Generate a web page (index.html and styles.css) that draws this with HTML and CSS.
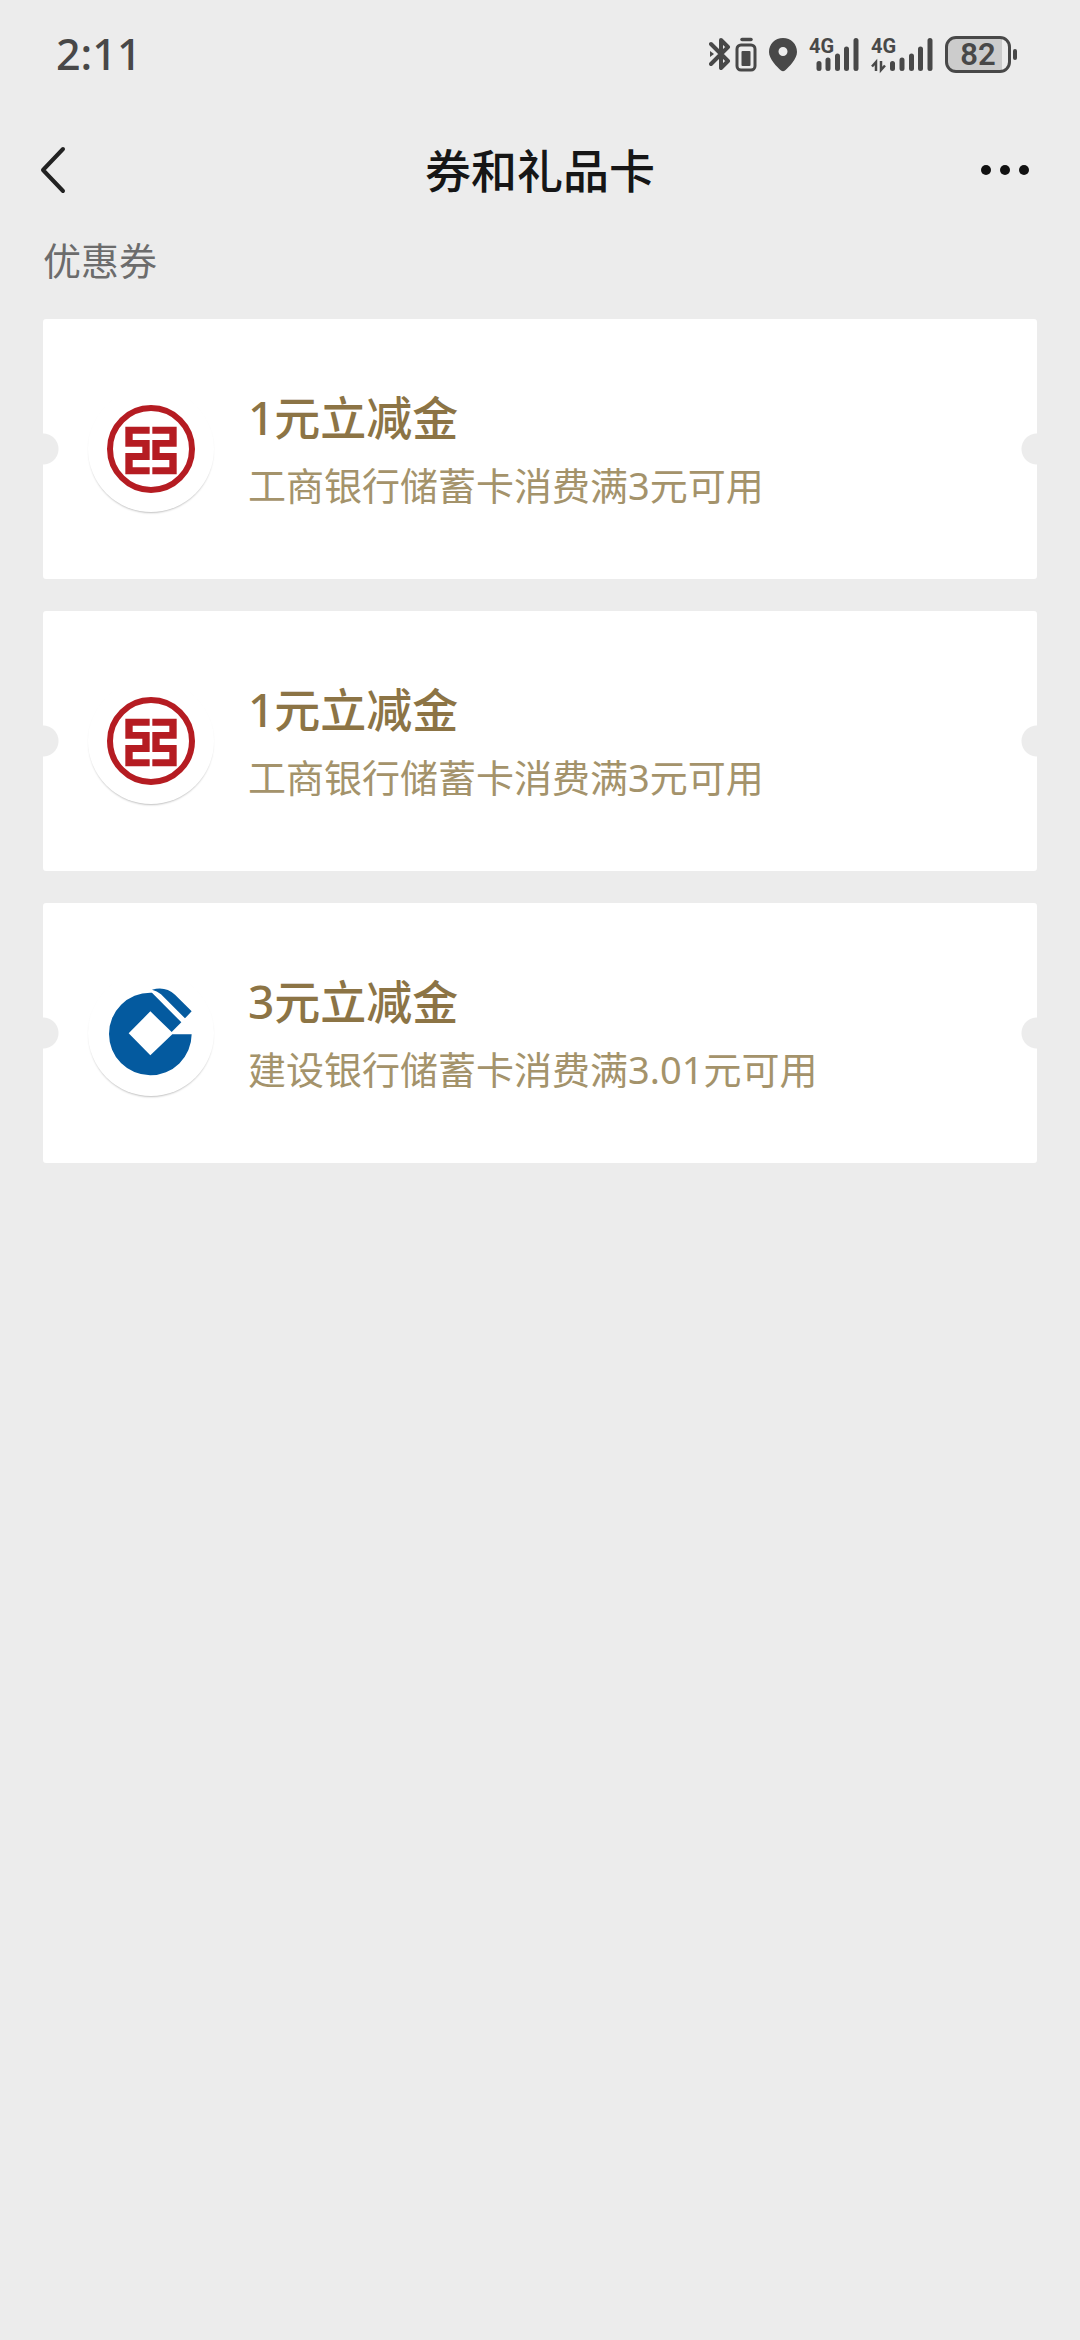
FILE: index.html
```html
<!DOCTYPE html>
<html lang="zh-CN">
<head>
<meta charset="utf-8">
<meta name="viewport" content="width=device-width, initial-scale=1">
<title>券和礼品卡</title>
<link rel="stylesheet" href="styles.css">
</head>
<body>
<svg class="symbols" aria-hidden="true">
  <symbol id="icbc" viewBox="0 0 264 264">
    <circle cx="132" cy="132" r="123" fill="none" stroke="#b51c22" stroke-width="18"/>
    <path fill="#b51c22" d="M55 65H128V86H77V105H128V165H77V187H128V208H55V144H106V125H55ZM209 65H136V86H187V105H136V165H187V187H136V208H209V144H158V125H209Z"/>
  </symbol>
  <symbol id="ccb" viewBox="0 0 264 264">
    <path fill="#045a9f" d="M130 11A124 124 0 1 0 254 136H196L130 199L65 133L130 67L194 129L223 100L135 11ZM135 2Q175-10 204 17L254 67L234 88L162 16Q150 5 135 2Z"/>
  </symbol>
</svg>

<div class="status">
  <time class="clock">2:11</time>
  <div class="indicators">
    <svg width="22" height="36" viewBox="0 0 22 36" aria-label="蓝牙">
      <path d="M2 8L19 25L12 32V4L19 11L2 28" fill="none" stroke="#484848" stroke-width="4" stroke-linejoin="round" stroke-linecap="round"/>
      <path d="M1 15L5 18L1 21Z" fill="#484848"/>
    </svg>
    <svg class="device" width="22" height="36" viewBox="0 0 22 36" aria-label="设备电量">
      <path d="M7 3.500H16" stroke="#484848" stroke-width="3.500" stroke-linecap="round"/>
      <rect x="2" y="9" width="18" height="25" rx="4" fill="none" stroke="#484848" stroke-width="3"/>
      <rect x="6.500" y="15" width="9" height="15" rx="1" fill="#484848"/>
    </svg>
    <svg class="pin" width="28" height="36" viewBox="0 0 28 36" aria-label="定位">
      <path fill="#484848" fill-rule="evenodd" d="M14 2C6 2 0 8 0 16C0 23 8 31 12 34.500Q14 36 16 34.500C20 31 28 23 28 16C28 8 22 2 14 2ZM14 11A4.500 4.500 0 1 1 14 20A4.500 4.500 0 1 1 14 11Z"/>
    </svg>
    <svg class="signal" width="50" height="48" viewBox="0 -6 50 48" aria-label="信号一">
      <text class="net" x="0" y="17">4G</text>
      <path d="M10 27.500V32.500M19 24V32.500M28.500 20V32.500M37.500 13V32.500M47 4.500V32.500" stroke="#484848" stroke-width="5" stroke-linecap="round"/>
    </svg>
    <svg class="signal" width="62" height="48" viewBox="0 -6 62 48" aria-label="信号二">
      <text class="net" x="0" y="17">4G</text>
      <path d="M5 35V26L1 30.500M10 25V34L14 29.500" fill="none" stroke="#484848" stroke-width="2.500"/>
      <path d="M21.500 27.500V32.500M31 24V32.500M40.500 20V32.500M49.500 13V32.500M59 4.500V32.500" stroke="#484848" stroke-width="5" stroke-linecap="round"/>
    </svg>
    <div class="battery"><span class="level">82</span></div>
  </div>
</div>

<header class="nav">
  <button class="back" type="button" aria-label="返回">
    <svg width="26" height="48" viewBox="0 0 26 48"><path d="M23 3L3 24L23 45" fill="none" stroke="#222" stroke-width="4" stroke-linecap="round" stroke-linejoin="round"/></svg>
  </button>
  <h1 class="title">券和礼品卡</h1>
  <button class="more" type="button" aria-label="更多">
    <svg width="50" height="12" viewBox="0 0 50 12" fill="#111"><circle cx="6" cy="6" r="5"/><circle cx="25" cy="6" r="5"/><circle cx="44" cy="6" r="5"/></svg>
  </button>
</header>

<main class="content">
  <h2 class="section">优惠券</h2>
  <ul class="coupons">
    <li class="coupon">
      <div class="logo"><svg width="88" height="88" aria-label="工商银行"><use href="#icbc"/></svg></div>
      <div class="info"><h3 class="amount">1元立减金</h3><p class="terms">工商银行储蓄卡消费满3元可用</p></div>
    </li>
    <li class="coupon">
      <div class="logo"><svg width="88" height="88" aria-label="工商银行"><use href="#icbc"/></svg></div>
      <div class="info"><h3 class="amount">1元立减金</h3><p class="terms">工商银行储蓄卡消费满3元可用</p></div>
    </li>
    <li class="coupon">
      <div class="logo"><svg width="88" height="88" aria-label="建设银行"><use href="#ccb"/></svg></div>
      <div class="info"><h3 class="amount">3元立减金</h3><p class="terms">建设银行储蓄卡消费满3.01元可用</p></div>
    </li>
  </ul>
</main>
</body>
</html>
```

FILE: styles.css
```css
* { box-sizing: border-box; margin: 0; padding: 0; }

body {
  min-height: 100vh;
  background: #ececec;
  font-family: "Noto Sans", "Noto Sans CJK SC", sans-serif;
}

svg { display: block; flex: none; }
.symbols { position: absolute; width: 0; height: 0; }
.logo svg { overflow: visible; }
symbol { overflow: visible; }

.status {
  display: flex;
  align-items: center;
  justify-content: space-between;
  height: 108px;
  padding: 0 69px 0 56px;
  color: #484848;
}
.clock { font-size: 43px; line-height: 60px; font-weight: 500; }
.indicators { display: flex; align-items: center; }
.device { margin-left: 4px; }
.pin { margin-left: 12px; }
.signal { margin-left: 12px; }
.net {
  font-family: "Roboto", sans-serif;
  font-size: 20px;
  font-weight: 700;
  fill: #484848;
}

.battery {
  position: relative;
  width: 66px;
  height: 37px;
  margin-left: 12px;
  border: 3px solid #484848;
  border-radius: 11px;
  background: linear-gradient(to right, #ccc 90%, #ececec 90%);
}
.battery::after {
  content: "";
  position: absolute;
  top: 10px;
  right: -9px;
  width: 4px;
  height: 11px;
  border-radius: 2px;
  background: #484848;
}
.level {
  display: block;
  font-family: "Roboto", sans-serif;
  font-size: 31px;
  line-height: 32px;
  font-weight: 600;
  text-align: center;
}

.nav {
  display: grid;
  grid-template-columns: 1fr auto 1fr;
  align-items: center;
  height: 124px;
  padding: 0 40px;
}
.nav button { border: 0; background: none; }
.back { justify-self: start; }
.more { justify-self: end; padding-right: 10px; }
.title { font-size: 46px; line-height: 64px; font-weight: 500; color: #161616; }

.content { padding: 0 43px; }
.section {
  margin-bottom: 31px;
  font-size: 38px;
  line-height: 56px;
  font-weight: 400;
  color: #6c6c6c;
}

.coupons { display: grid; gap: 32px; list-style: none; }
.coupon {
  display: flex;
  align-items: center;
  gap: 34px;
  min-height: 260px;
  padding: 0 45px;
  border-radius: 3px;
  background:
    radial-gradient(circle at 0 50%, #ececec 15px, transparent 16px),
    radial-gradient(circle at 100% 50%, #ececec 15px, transparent 16px),
    #fff;
}
.logo {
  display: grid;
  place-items: center;
  width: 126px;
  height: 126px;
  border-radius: 50%;
  background: #fff;
  box-shadow: 0 2px 2px -1px rgba(0, 0, 0, 0.25);
}
.info { padding-top: 4px; }
.amount { font-size: 46px; line-height: 68px; font-weight: 500; color: #8c7445; }
.terms { font-size: 38px; line-height: 68px; color: #a4936b; }
```
